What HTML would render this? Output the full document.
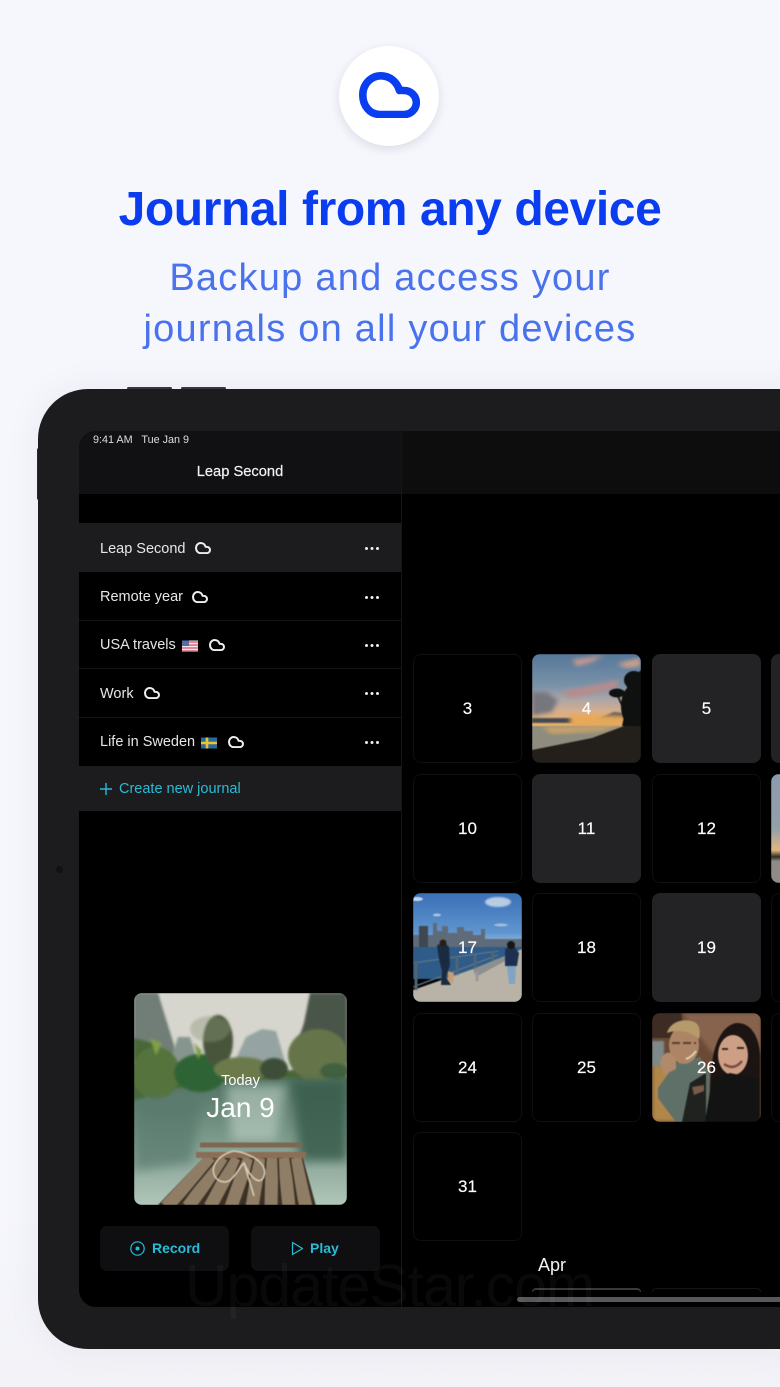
<!DOCTYPE html>
<html><head><meta charset="utf-8"><style>
html,body{margin:0;padding:0}
body{width:780px;height:1387px;overflow:hidden;position:relative;background:linear-gradient(#f6f7fd 0,#f6f7fd 1200px,#f2f2f7 1387px);font-family:"Liberation Sans",sans-serif}
.a{position:absolute}
.t{position:absolute;white-space:nowrap}
.row{position:absolute;left:79px;width:322px;height:48px;background:#000}
.row span{position:absolute;left:21px;top:16px;font-size:14.5px;color:#e6e6e6;white-space:nowrap;line-height:18px}
.row i{position:absolute;left:286px;top:23px;width:3px;height:3px;border-radius:50%;background:#eee;box-shadow:5.5px 0 #eee,11px 0 #eee}
.row svg{position:absolute;top:18px;width:16px;height:12px}
.sep{position:absolute;left:79px;width:322px;height:1px;background:#161618}
.c{position:absolute;width:107px;height:107px;border:1px solid #0f0f11;border-radius:8px;color:#fff;font-size:17px;text-align:center;line-height:107px;background:#000;overflow:hidden;-webkit-text-stroke:.15px #fff}
.c.g{background:#232325;border-color:#232325}
.c.p{width:109px;height:109px;border:0;line-height:109px}
.c svg{position:absolute;left:0;top:0}
.c.p svg,.soft{filter:blur(.5px)}
.c b{position:relative;font-weight:400}
</style></head><body>
<svg width="0" height="0" style="position:absolute"><defs>
<symbol id="cl" viewBox="359 72 61 46"><path d="M380 114.5C370 114.5 362.8 106 362.8 95C362.8 84 371 75.8 381 75.8C390 75.8 397 82 399.5 90.5C400.500 90.200 402 90.300 404 90.500C411 90.500 416.300 96 416.300 102.500C416.300 109 411 114.500 404 114.500Z" fill="none" stroke="currentColor" stroke-width="7.6" stroke-linejoin="round"/></symbol>
<filter id="b1"><feGaussianBlur stdDeviation="1"/></filter><filter id="b2"><feGaussianBlur stdDeviation="5"/></filter>
<filter id="b3"><feGaussianBlur stdDeviation="2.2"/></filter><filter id="b4"><feGaussianBlur stdDeviation=".7"/></filter>
</defs></svg>

<div class="a" style="left:339px;top:46px;width:100px;height:100px;border-radius:50%;background:#fff;box-shadow:0 3px 10px rgba(30,30,60,.13)"></div>
<svg class="a" style="left:359px;top:72px;color:#0a3cf0" width="61" height="46"><use href="#cl"/></svg>

<div class="t" style="left:0;width:780px;text-align:center;top:182px;font-size:48px;line-height:56px;font-weight:700;color:#0a3cf0;letter-spacing:-.41px">Journal from any device</div>
<div class="t" style="left:0;width:780px;text-align:center;top:253px;font-size:38px;line-height:51px;color:#4a72ec;letter-spacing:1.24px">Backup and access your<br>journals on all your devices</div>

<!-- device -->
<div class="a" style="left:127px;top:387px;width:45px;height:3px;background:#3a3a3c;border-radius:2px"></div>
<div class="a" style="left:181px;top:387px;width:45px;height:3px;background:#3a3a3c;border-radius:2px"></div>
<div class="a" style="left:37px;top:448px;width:4px;height:52px;background:#2a2a2c;border-radius:2px"></div>
<div class="a" style="left:38px;top:389px;width:800px;height:960px;background:#1c1c1e;border-radius:50px;box-shadow:0 0 40px rgba(40,40,70,.06)"></div>
<div class="a" style="left:56px;top:866px;width:7px;height:7px;border-radius:50%;background:#111"></div>
<div class="a" style="left:79px;top:431px;width:760px;height:876px;background:#000;border-radius:17px"></div>

<!-- headers -->
<div class="a" style="left:79px;top:431px;width:322px;height:63px;background:#111113;border-top-left-radius:17px"></div>
<div class="a" style="left:402px;top:431px;width:378px;height:63px;background:#0d0d0e"></div>
<div class="a" style="left:401px;top:431px;width:1px;height:876px;background:#161618"></div>
<div class="t" style="left:93px;top:434px;font-size:10.8px;line-height:13px;color:#ddd">9:41 AM&nbsp;&nbsp; Tue Jan 9</div>
<div class="t" style="left:79px;width:322px;text-align:center;top:463px;font-size:14.7px;line-height:18px;color:#f2f2f2;-webkit-text-stroke:.2px #f2f2f2">Leap Second</div>

<!-- rows -->
<div class="row" style="top:523px;height:49px;background:#1c1c1e"><span style="top:16.5px">Leap Second</span><svg style="left:116px;top:19px;color:#eee"><use href="#cl"/></svg><i style="top:24px"></i></div>
<div class="row" style="top:572px"><span>Remote year</span><svg style="left:113px;top:19px;color:#eee"><use href="#cl"/></svg><i style="top:24px"></i></div>
<div class="row" style="top:621px"><span style="top:15px">USA travels</span><svg style="left:130px;color:#eee"><use href="#cl"/></svg><i></i>
<svg style="left:103px;top:19px" width="16" height="11" viewBox="0 0 16 11"><rect width="16" height="11" fill="#ece6ea"/><path d="M0 1.500h16M0 4.500h16M0 7.500h16M0 10.500h16" stroke="#dc6c7c" stroke-width="1.4"/><rect width="7" height="5.5" fill="#5a68a8"/></svg></div>
<div class="row" style="top:669px"><span style="top:15.5px">Work</span><svg style="left:65px;color:#eee"><use href="#cl"/></svg><i></i></div>
<div class="row" style="top:718px"><span style="top:15px">Life in Sweden</span><svg style="left:149px;color:#eee"><use href="#cl"/></svg><i></i>
<svg style="left:122px;top:19px" width="16" height="11" viewBox="0 0 16 11"><rect width="16" height="11" fill="#2a6aa0"/><path d="M0 5.500h16M6 0v11" stroke="#ecc52a" stroke-width="2.6"/></svg></div>
<div class="sep" style="top:620px"></div><div class="sep" style="top:668px"></div><div class="sep" style="top:717px"></div>
<div class="a" style="left:79px;top:766px;width:322px;height:45px;background:#1c1c1e"></div>
<svg class="a" style="left:100px;top:783px" width="12" height="12"><path d="M6 0v12M0 6h12" stroke="#28bcd8" stroke-width="1.4"/></svg>
<div class="t" style="left:119px;top:780px;font-size:14.5px;line-height:18px;color:#28bcd8">Create new journal</div>

<!-- main photo -->
<div class="a" style="left:134px;top:993px;width:213px;height:212px;border-radius:8px;overflow:hidden">
<svg class="soft" width="213" height="212" viewBox="0 0 213 212">
<defs>
<linearGradient id="w" x1="0" y1="0" x2="0" y2="1"><stop offset="0" stop-color="#4f7061"/><stop offset=".45" stop-color="#7a988a"/><stop offset="1" stop-color="#b0c6b9"/></linearGradient>
</defs>
<rect width="213" height="212" fill="#d6d6ce"/>
<path d="M0 0H24C30 20 38 45 44 65L0 90Z" fill="#6f7e77" filter="url(#b1)"/>
<path d="M38 62L44 44L56 44L66 75H40Z" fill="#87958f" filter="url(#b1)"/>
<path d="M100 70L112 44L128 36L142 38L152 72Z" fill="#95a3a2" filter="url(#b1)"/>
<path d="M160 60L170 30L176 0H213V70Z" fill="#4a5448" filter="url(#b1)"/>
<rect y="85" width="213" height="127" fill="url(#w)"/>
<g filter="url(#b1)">
<path d="M0 45L18 50L38 68L60 72L150 78L213 70V86H150L110 88L70 90L40 96L0 108Z" fill="#4a6738"/>
<ellipse cx="22" cy="80" rx="24" ry="26" fill="#55733e"/>
<ellipse cx="66" cy="80" rx="26" ry="19" fill="#2f6436"/>
<ellipse cx="84" cy="48" rx="15" ry="26" fill="#48553a"/>
<ellipse cx="76" cy="36" rx="20" ry="13" fill="#8d9578" opacity=".4"/>
<ellipse cx="108" cy="76" rx="28" ry="12" fill="#6c7a4c"/>
<ellipse cx="140" cy="76" rx="14" ry="11" fill="#3d4e38"/>
<ellipse cx="184" cy="62" rx="30" ry="26" fill="#66754a"/>
<ellipse cx="200" cy="78" rx="14" ry="8" fill="#3f6040"/>
<path d="M16 45L22 62L28 50ZM60 50L64 66L68 58Z" fill="#7f9f4a"/>
</g>
<path d="M0 105H68L58 170L0 178Z" fill="#54766a" opacity=".65" filter="url(#b2)"/>
<path d="M158 88H213V168H166Z" fill="#375c4c" opacity=".85" filter="url(#b2)"/>
<path d="M92 92H152L142 148H98Z" fill="#c0d2c6" opacity=".6" filter="url(#b2)"/>
<path d="M23 213L72 162H168L182 213Z" fill="#3d3327"/>
<g stroke-width="13" stroke="#8f7d66">
<path d="M32 214L78 165"/><path d="M54 214L90 165"/><path d="M76 214L102 165"/><path d="M97 214L114 165"/><path d="M118 214L126 165"/><path d="M137 214L138 165"/><path d="M155 214L150 165"/><path d="M172 214L161 165"/></g>
<g stroke-width="1.6" stroke="#3a3025"><path d="M43 214L84 165M65 214L96 165M87 214L108 165M108 214L120 165M128 214L132 165M146 214L144 165M164 214L156 165"/></g>
<path d="M66 152H168" stroke="#7e6650" stroke-width="5"/>
<path d="M62 162H172" stroke="#8c6d55" stroke-width="6"/>
<path d="M100 158C78 163 74 182 86 188C98 193 102 178 110 170C118 188 127 192 130 183C134 170 116 160 100 158M110 170L120 203" fill="none" stroke="#d8ccb4" stroke-width="1.6"/>
</svg>
<div class="t" style="left:0;width:213px;text-align:center;top:79px;font-size:14.5px;line-height:18px;color:#fff">Today</div>
<div class="t" style="left:0;width:213px;text-align:center;top:98px;font-size:28px;line-height:34px;color:#fff">Jan 9</div>
</div>

<!-- buttons -->
<div class="a" style="left:100px;top:1226px;width:129px;height:45px;background:#0f0f11;border-radius:7px"></div>
<div class="a" style="left:251px;top:1226px;width:129px;height:45px;background:#0f0f11;border-radius:7px"></div>
<svg class="a" style="left:129px;top:1240px" width="17" height="17"><circle cx="8.5" cy="8.5" r="6.7" fill="none" stroke="#28bcd8" stroke-width="1.2"/><circle cx="8.5" cy="8.5" r="2" fill="#28bcd8"/></svg>
<div class="t" style="left:152px;top:1239px;font-size:14px;line-height:18px;font-weight:700;color:#28bcd8">Record</div>
<svg class="a" style="left:291px;top:1241px" width="13" height="15"><path d="M1.5 1.5V13.5L11.5 7.5Z" fill="none" stroke="#28bcd8" stroke-width="1.2" stroke-linejoin="round"/></svg>
<div class="t" style="left:310px;top:1239px;font-size:14px;line-height:18px;font-weight:700;color:#28bcd8">Play</div>

<!-- grid -->
<div class="c" style="left:413px;top:654px"><b>3</b></div>
<div class="c p" style="left:532px;top:654px">
<svg width="109" height="109" viewBox="0 0 109 109">
<defs><linearGradient id="s" x1="0" y1="0" x2="0" y2="1"><stop offset="0" stop-color="#56789a"/><stop offset=".45" stop-color="#7b93a8"/><stop offset=".62" stop-color="#aaa5a8"/><stop offset=".8" stop-color="#d6ae8c"/><stop offset="1" stop-color="#edb566"/></linearGradient></defs>
<rect width="109" height="72" fill="url(#s)"/>
<path d="M40 6L72 1L60 8L45 12Z" fill="#c89a90" filter="url(#b3)"/>
<path d="M85 10L108 4V12L95 14Z" fill="#d0a08a" filter="url(#b3)"/>
<path d="M28 38L88 26L84 34L40 44Z" fill="#b88c8c" filter="url(#b3)"/>
<path d="M0 38H14L26 46L20 58L0 62Z" fill="#76767e" filter="url(#b3)"/>
<rect y="64" width="42" height="5" fill="#44474f" filter="url(#b4)"/>
<path d="M62 66L82 58L100 60V68H62Z" fill="#55555a" filter="url(#b4)"/>
<path d="M38 60L95 62L92 72H38Z" fill="#e8a858" filter="url(#b3)"/>
<rect y="72" width="100" height="26" fill="#8e8c7e"/>
<path d="M10 73L92 71L70 77L20 80Z" fill="#c9a36b" filter="url(#b3)"/>
<path d="M0 96L60 84L95 71L109 69V109H0Z" fill="#231f1a"/>
<g fill="#0f1010"><path d="M90 72L95 50L95 30L109 16V72Z"/><ellipse cx="102" cy="26" rx="10" ry="9"/><ellipse cx="85" cy="39" rx="8" ry="4.5"/><ellipse cx="100" cy="52" rx="11" ry="20"/></g>
<path d="M85 40L91 54" stroke="#0f1010" stroke-width="1.6"/>
</svg><b>4</b></div>
<div class="c g" style="left:652px;top:654px"><b>5</b></div>
<div class="c g" style="left:771px;top:654px"></div>

<div class="c" style="left:413px;top:774px"><b>10</b></div>
<div class="c g" style="left:532px;top:774px"><b>11</b></div>
<div class="c" style="left:652px;top:774px"><b>12</b></div>
<div class="c p" style="left:771px;top:774px">
<svg width="12" height="109" viewBox="0 0 12 109"><defs><linearGradient id="s2" x1="0" y1="0" x2="0" y2="1"><stop offset="0" stop-color="#8b9aae"/><stop offset=".5" stop-color="#94a0aa"/><stop offset=".7" stop-color="#e2b77e"/><stop offset=".76" stop-color="#2c2a28"/><stop offset=".8" stop-color="#8e8c85"/></linearGradient></defs><rect width="12" height="109" fill="url(#s2)"/></svg></div>

<div class="c p" style="left:413px;top:893px">
<svg width="109" height="109" viewBox="0 0 109 109">
<defs><linearGradient id="s3" x1="0" y1="0" x2="0" y2="1"><stop offset="0" stop-color="#3a70b6"/><stop offset=".7" stop-color="#5f95cf"/><stop offset="1" stop-color="#a9c6e2"/></linearGradient></defs>
<rect width="109" height="56" fill="url(#s3)"/>
<ellipse cx="85" cy="9" rx="13" ry="5" fill="#dfe8f2" opacity=".75" filter="url(#b4)"/>
<ellipse cx="4" cy="6" rx="6" ry="2" fill="#e5edf5" opacity=".8"/>
<ellipse cx="24" cy="22" rx="4" ry="1.500" fill="#cfdeee" opacity=".7"/>
<ellipse cx="88" cy="32" rx="7" ry="1.500" fill="#cfdeee" opacity=".6"/>
<path d="M0 42H6V33H15V42H20V30H24V38H29V33H35V40H44V34H51V38H60V42H68V36H72V46L109 46V55H0Z" fill="#5f6b78"/>
<path d="M6 33H15V55H6Z" fill="#3e4752"/>
<rect y="54" width="109" height="32" fill="#2f5b88"/>
<path d="M0 97L60 76L109 56V109H0Z" fill="#b9b2a6"/>
<path d="M0 70L85 58M0 94L85 62" stroke="#5d7684" stroke-width="1.3" fill="none"/>
<path d="M3 68V97M44 64V82M62 62V75M80 58V68" stroke="#4d6675" stroke-width="3"/>
<path d="M60 76L92 63V68L63 84Z" fill="#8b8f90"/>
<path d="M64 78V88" stroke="#999" stroke-width="3"/>
<path d="M24 52L32 50L36 54L37 72L33 84L38 92H28L29 78L26 66Z" fill="#1b2b3f"/>
<circle cx="30" cy="50" r="3.5" fill="#2a1d18"/>
<path d="M35 78L41 80L40 90L35 88Z" fill="#c99d74"/>
<path d="M92 56L100 52L106 60L104 73H92Z" fill="#1d3050"/>
<circle cx="98" cy="52" r="4" fill="#1a1512"/>
<path d="M94 73H103L102 91H96Z" fill="#82a3c4"/>
</svg><b>17</b></div>
<div class="c" style="left:532px;top:893px"><b>18</b></div>
<div class="c g" style="left:652px;top:893px"><b>19</b></div>
<div class="c" style="left:771px;top:893px"></div>

<div class="c" style="left:413px;top:1013px"><b>24</b></div>
<div class="c" style="left:532px;top:1013px"><b>25</b></div>
<div class="c p" style="left:652px;top:1013px">
<svg width="109" height="109" viewBox="0 0 109 109">
<rect width="109" height="109" fill="#6a4a36"/>
<path d="M0 0H30V25H0Z" fill="#3e2c24"/>
<path d="M30 0H109V40H60Z" fill="#87644e" filter="url(#b3)"/>
<path d="M0 50H20L34 109H0Z" fill="#b08648" filter="url(#b3)"/>
<rect y="28" width="12" height="25" fill="#7e8a8a" filter="url(#b4)"/>
<path d="M6 75L24 50L48 44L58 62L56 109H24L6 85Z" fill="#5f7069"/>
<path d="M38 70L54 60V109H30Z" fill="#20221f"/>
<path d="M40 74L52 72L52 78L42 82Z" fill="#7a5a48"/>
<ellipse cx="32" cy="32" rx="15" ry="19" fill="#ad8566"/>
<path d="M15 20C18 8 34 4 44 10C49 14 48 24 47 26C38 18 26 16 15 20Z" fill="#b59a6c"/>
<path d="M20 30H44" stroke="#5d4030" stroke-width="2" stroke-dasharray="8 3"/>
<path d="M34 46Q40 44 44 38" stroke="#e2d2c0" stroke-width="2" fill="none"/>
<path d="M8 50C10 38 20 36 24 46L24 56L12 62Z" fill="#b08a6a"/>
<path d="M58 80C58 40 66 14 84 10C100 9 108 26 108 44V109H58Z" fill="#1b1412"/>
<ellipse cx="81" cy="42" rx="15" ry="20" fill="#cda086"/>
<path d="M72 51Q82 58 90 48" stroke="#7b4a44" stroke-width="2.500" fill="none"/>
<path d="M70 36H76M85 35H92" stroke="#2a1a18" stroke-width="1.800"/>
<path d="M53 109L60 66L78 60L108 66V109Z" fill="#141313"/>
</svg><b>26</b></div>
<div class="c" style="left:771px;top:1013px"></div>

<div class="c" style="left:413px;top:1132px"><b>31</b></div>

<div class="t" style="left:538px;top:1254px;font-size:18px;line-height:22px;color:#f2f2f2">Apr</div>
<div class="a" style="left:532px;top:1288px;width:109px;height:4px;border:1px solid #3a3a3c;border-bottom:0;border-radius:8px 8px 0 0;box-sizing:border-box;background:#000;border-top-width:2px"></div>
<div class="a" style="left:652px;top:1288px;width:109px;height:4px;border:1px solid #151517;border-bottom:0;border-radius:8px 8px 0 0;box-sizing:border-box"></div>
<div class="a" style="left:517px;top:1297px;width:263px;height:5px;background:#58585a;border-radius:3px 0 0 3px"></div>

<div class="t" style="left:185px;top:1253px;font-size:59px;line-height:66px;letter-spacing:-1px;color:rgba(255,255,255,.035)">UpdateStar.com</div>
</body></html>
